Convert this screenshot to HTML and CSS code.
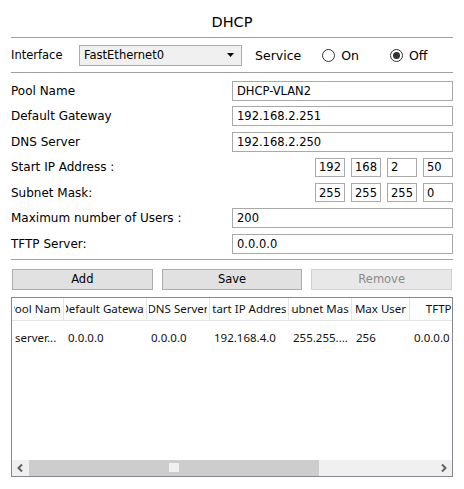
FILE: index.html
```html
<!DOCTYPE html>
<html>
<head>
<meta charset="utf-8">
<link rel="stylesheet" href="styles.css">
</head>
<body>
<div class="panel">
  <div class="title">DHCP</div>
  <div class="sep"></div>
  <div class="iface-row">
    <span class="iface-label">Interface</span>
    <div class="select">
      <span>FastEthernet0</span>
      <svg class="caret" width="8" height="5" viewBox="0 0 8 5"><path d="M0 0H7L3.5 4Z" fill="#000"/></svg>
    </div>
    <span class="service">Service</span>
    <label class="radio"><span class="dot"></span>On</label>
    <label class="radio checked"><span class="dot"></span>Off</label>
  </div>
  <div class="sep"></div>
  <div class="form">
    <div class="row"><span class="lbl">Pool Name</span><div class="field">DHCP-VLAN2</div></div>
    <div class="row"><span class="lbl">Default Gateway</span><div class="field">192.168.2.251</div></div>
    <div class="row"><span class="lbl">DNS Server</span><div class="field">192.168.2.250</div></div>
    <div class="row"><span class="lbl">Start IP Address :</span>
      <div class="octets"><div class="oct">192</div><div class="oct">168</div><div class="oct">2</div><div class="oct">50</div></div>
    </div>
    <div class="row"><span class="lbl">Subnet Mask:</span>
      <div class="octets"><div class="oct">255</div><div class="oct">255</div><div class="oct">255</div><div class="oct">0</div></div>
    </div>
    <div class="row"><span class="lbl">Maximum number of Users :</span><div class="field">200</div></div>
    <div class="row"><span class="lbl">TFTP Server:</span><div class="field">0.0.0.0</div></div>
  </div>
  <div class="sep sep-bottom"></div>
  <div class="buttons">
    <div class="btn">Add</div>
    <div class="btn">Save</div>
    <div class="btn disabled">Remove</div>
  </div>
  <div class="table">
    <div class="thead">
      <div class="th c1"><div class="clip"><span>Pool Name</span></div></div>
      <div class="th c2"><div class="clip"><span>Default Gateway</span></div></div>
      <div class="th c3"><div class="clip"><span>DNS Server</span></div></div>
      <div class="th c4"><div class="clip"><span>Start IP Address</span></div></div>
      <div class="th c5"><div class="clip"><span>Subnet Mask</span></div></div>
      <div class="th c6"><div class="clip"><span>Max User</span></div></div>
      <div class="th c7"><div class="clip"><span>TFTP Server</span></div></div>
    </div>
    <div class="trow">
      <div class="td c1">server...</div>
      <div class="td c2">0.0.0.0</div>
      <div class="td c3">0.0.0.0</div>
      <div class="td c4">192.168.4.0</div>
      <div class="td c5">255.255....</div>
      <div class="td c6">256</div>
      <div class="td c7">0.0.0.0</div>
    </div>
    <div class="tfill"></div>
    <div class="hscroll">
      <div class="sbtn"><svg width="7" height="8" viewBox="0 0 7 8"><path d="M5 0.5L1.5 4L5 7.5" fill="none" stroke="#606060" stroke-width="2"/></svg></div>
      <div class="thumb"><span class="grip"></span></div>
      <div class="track"></div>
      <div class="sbtn"><svg width="7" height="8" viewBox="0 0 7 8"><path d="M2 0.5L5.5 4L2 7.5" fill="none" stroke="#606060" stroke-width="2"/></svg></div>
    </div>
  </div>
</div>
</body>
</html>
```
FILE: styles.css
```css
html, body {
  margin: 0;
  padding: 0;
  background: #fff;
}
body {
  font-family: "DejaVu Sans", Verdana, sans-serif;
  font-size: 12px;
  color: #000;
  width: 464px;
  height: 489px;
  overflow: hidden;
}
.panel {
  padding: 0 11px;
}
.title {
  height: 37px;
  line-height: 44px;
  text-align: center;
  font-size: 14.5px;
}
.sep {
  height: 1px;
  background: #a0a0a0;
}
.iface-row {
  height: 34px;
  display: flex;
  align-items: center;
}
.iface-label {
  font-size: 11.5px;
  width: 68px;
}
.select {
  box-sizing: border-box;
  width: 163px;
  height: 21px;
  border: 1px solid #acacac;
  background: #f0f0f0;
  display: flex;
  align-items: center;
  justify-content: space-between;
  padding: 0 6px 0 4px;
  font-size: 11.5px;
}
.caret {
  display: block;
}
.service {
  font-size: 12.5px;
  margin-left: 13px;
}
.radio {
  display: flex;
  align-items: center;
  font-size: 12.5px;
  margin-left: 21px;
}
.radio.checked {
  margin-left: 31px;
}
.dot {
  box-sizing: border-box;
  width: 13px;
  height: 13px;
  border-radius: 50%;
  border: 1px solid #333;
  margin-right: 6px;
  position: relative;
  background: #fff;
}
.radio.checked .dot::after {
  content: "";
  position: absolute;
  left: 2px;
  top: 2px;
  width: 7px;
  height: 7px;
  border-radius: 50%;
  background: #333;
}
.form {
  padding-top: 5px;
}
.row {
  height: 25.5px;
  display: flex;
  align-items: center;
  justify-content: space-between;
}
.lbl {
  font-size: 12px;
}
.field {
  box-sizing: border-box;
  width: 221px;
  height: 20px;
  border: 1px solid #a9a9a9;
  padding: 0 4px;
  display: flex;
  align-items: center;
  font-size: 11.5px;
}
.octets {
  display: flex;
  gap: 6px;
}
.oct {
  box-sizing: border-box;
  width: 30px;
  height: 19px;
  border: 1px solid #a9a9a9;
  padding: 0 3px;
  display: flex;
  align-items: center;
  font-size: 11.5px;
}
.sep-bottom {
  margin-top: 2px;
}
.buttons {
  display: grid;
  grid-template-columns: 1fr 1fr 1fr;
  gap: 9px;
  margin: 9px 1px 0 1px;
}
.btn {
  box-sizing: border-box;
  height: 21px;
  border: 1px solid #adadad;
  background: #e1e1e1;
  display: flex;
  align-items: center;
  justify-content: center;
  font-size: 11.5px;
}
.btn.disabled {
  background: #e8e8e8;
  border-color: #d2d2d2;
  color: #8a8a8a;
}
.table {
  box-sizing: border-box;
  margin-top: 7px;
  height: 180px;
  border: 1px solid #828790;
  display: flex;
  flex-direction: column;
  overflow: hidden;
  font-family: "Noto Sans", "Open Sans", sans-serif;
  font-size: 11.5px;
  color: #111;
}
.thead, .trow {
  display: flex;
}
.thead {
  height: 22px;
  border-bottom: 1px solid #e5e5e5;
}
.th {
  flex: none;
  box-sizing: border-box;
  border-right: 1px solid #e5e5e5;
  padding: 0 2px;
  display: flex;
}
.clip {
  flex: 1;
  display: flex;
  justify-content: center;
  align-items: center;
  overflow: hidden;
  white-space: nowrap;
}
.clip span {
  flex: none;
}
.trow {
  height: 34px;
  align-items: center;
}
.td {
  flex: none;
  box-sizing: border-box;
  padding-left: 4px;
  white-space: nowrap;
  overflow: hidden;
}
.td.c1 { padding-left: 3px; }
.c1 { width: 52px; }
.c2 { width: 83px; }
.c3 { width: 63px; }
.c4 { width: 79px; }
.c5 { width: 63px; }
.c6 { width: 58px; }
.c7 { width: 96px; }
.tfill {
  flex: 1;
}
.hscroll {
  height: 16px;
  display: flex;
  background: #f0f0f0;
}
.sbtn {
  width: 17px;
  display: flex;
  align-items: center;
  justify-content: center;
}
.thumb {
  width: 290px;
  background: #cdcdcd;
  display: flex;
  align-items: center;
  justify-content: center;
}
.grip {
  width: 10px;
  height: 9px;
  background: #f0f0f0;
}
.track {
  flex: 1;
}
```
